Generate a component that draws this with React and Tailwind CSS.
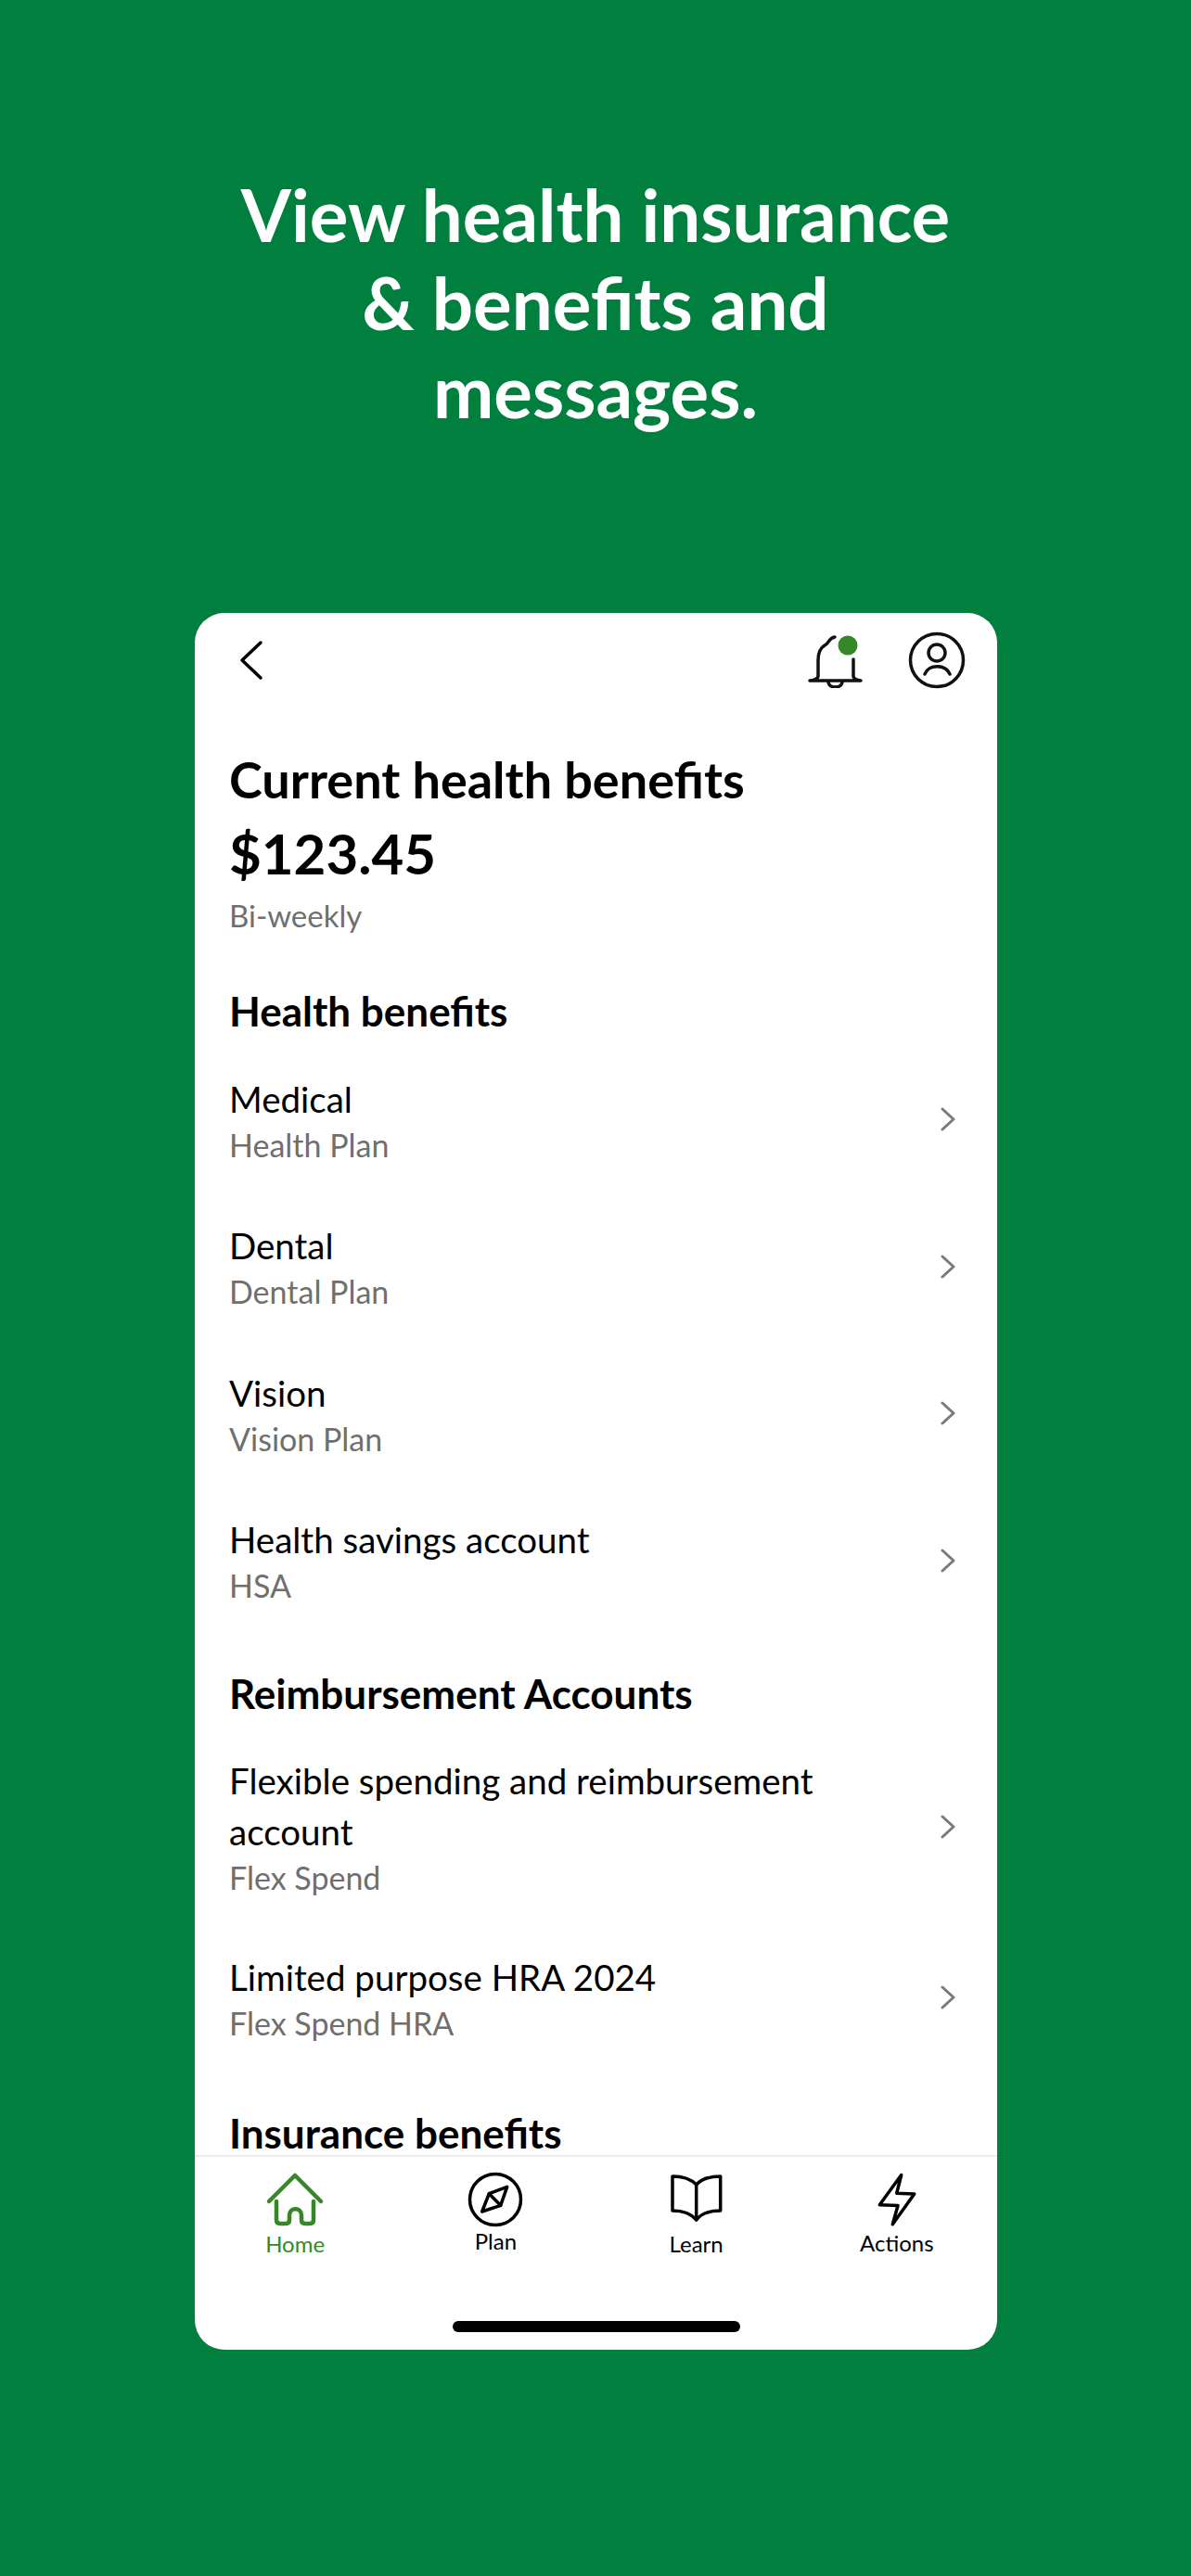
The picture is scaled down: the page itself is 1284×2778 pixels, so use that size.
import React from 'react';

const healthRows = [
  { title: 'Medical', sub: 'Health Plan' },
  { title: 'Dental', sub: 'Dental Plan' },
  { title: 'Vision', sub: 'Vision Plan' },
  { title: 'Health savings account', sub: 'HSA' },
];

const reimbursementRows = [
  { title: 'Flexible spending and reimbursement account', sub: 'Flex Spend' },
  { title: 'Limited purpose HRA 2024', sub: 'Flex Spend HRA' },
];

const BackIcon = () => (
  <svg width="30" height="44" viewBox="0 0 30 44" fill="none" stroke="#000" strokeWidth="3.5" strokeLinecap="round" strokeLinejoin="round">
    <path d="M25 3 L5 22 L25 41" />
  </svg>
);

const BellIcon = () => (
  <svg width="60" height="60" viewBox="30 22 60 60" fill="none" stroke="#111" strokeWidth="3.5" strokeLinecap="round" strokeLinejoin="round">
    <path d="M60 27 C53 28 54 34 49 36 C44 39 42 44 42 52 L42 69 C42 72 37 74 33 74 L88 74 C84 74 80 72 80 69 L80 51" />
    <path d="M53 75 C53 83 68 83 68 75" />
    <circle cx="74" cy="36" r="10.5" fill="#368727" stroke="none" />
  </svg>
);

const PersonIcon = () => (
  <svg width="64" height="64" viewBox="138 20 64 64" fill="none" stroke="#111" strokeWidth="3.5" strokeLinecap="round">
    <circle cx="170" cy="52" r="28.5" />
    <circle cx="170" cy="44" r="9" />
    <path d="M157 67 C161 56 179 56 184 67" />
  </svg>
);

const RowChevron = () => (
  <svg width="20" height="30" viewBox="0 0 20 30" fill="none" stroke="#7a7a7a" strokeWidth="3" strokeLinecap="round" strokeLinejoin="round">
    <path d="M4 4 L16 15 L4 26" />
  </svg>
);

const HomeIcon = () => (
  <svg width="66" height="66" viewBox="15 5 66 66" fill="none" stroke="#368727" strokeWidth="4.5" strokeLinecap="round" strokeLinejoin="round">
    <path d="M20 40 L48 12 L76 40" />
    <path d="M28 40 L28 60 Q28 64 32 64 L38 64 Q42 64 42 60 L42 55 C42 46 55 46 55 55 L55 60 Q55 64 59 64 L64 64 Q68 64 68 60 L68 40" />
  </svg>
);

const PlanIcon = () => (
  <svg width="66" height="66" viewBox="232 4 66 66" fill="none" stroke="#000" strokeWidth="3.5" strokeLinecap="round" strokeLinejoin="round">
    <circle cx="265" cy="37" r="27.5" />
    <path d="M277.7 23.3 L258.3 30.7 L250.7 50 L270.7 43.3 Z" />
    <path d="M258.3 30.7 L270.7 43.3" />
  </svg>
);

const LearnIcon = () => (
  <svg width="66" height="66" viewBox="18 5 66 66" fill="none" stroke="#000" strokeWidth="3.5" strokeLinecap="round" strokeLinejoin="round">
    <path d="M50.7 22 C45 16 35 13 25 13 L25 50 C35 50 45 53 50.7 60 C56 53 66 50 76.7 50 L76.7 13 C66 13 56 16 50.7 22 Z" />
    <path d="M50.7 22 L50.7 60" />
  </svg>
);

const ActionsIcon = () => (
  <svg width="66" height="66" viewBox="234 3 66 66" fill="none" stroke="#000" strokeWidth="3.5" strokeLinecap="round" strokeLinejoin="round">
    <path d="M271.7 9.5 L248.3 41.7 L268 42.5 L262.3 62.7 L285.7 30 L266.7 29.3 Z" />
  </svg>
);

const BenefitRow = ({ title, sub, className }) => (
  <div className={`flex items-center justify-between pr-[43px] ${className}`}>
    <div className="w-[680px]">
      <p className="text-[38.5px] leading-[55px] text-black">{title}</p>
      <p className="text-[34px] leading-[44px] text-[#6f6f6f]">{sub}</p>
    </div>
    <RowChevron />
  </div>
);

const tabs = [
  { label: 'Home', Icon: HomeIcon, color: 'text-[#368727]', offset: 'mt-[0px]' },
  { label: 'Plan', Icon: PlanIcon, color: 'text-black', offset: 'mt-[-3px]' },
  { label: 'Learn', Icon: LearnIcon, color: 'text-black', offset: 'mt-[0px]' },
  { label: 'Actions', Icon: ActionsIcon, color: 'text-black', offset: 'mt-[-1px]' },
];

export default function App() {
  return (
    <div className="min-h-[2778px] bg-[#007f3e] font-['Lato','Liberation_Sans',sans-serif] pt-[184px]">
      <h1 className="mx-auto w-[900px] text-center text-[78px] leading-[95px] font-bold text-white">
        View health insurance<br />&amp; benefits and<br />messages.
      </h1>

      <div className="ml-[210px] mt-[192px] flex h-[1873px] w-[865px] flex-col overflow-hidden rounded-[32px] bg-white">
        <div className="flex h-[102px] shrink-0 items-center justify-between pl-[46px] pr-[33px]">
          <BackIcon />
          <div className="flex items-center gap-[48px]">
            <BellIcon />
            <PersonIcon />
          </div>
        </div>

        <div className="min-h-0 flex-1 overflow-hidden pl-[37px]">
          <h2 className="mt-[48px] text-[54px] leading-[60px] font-bold text-black">Current health benefits</h2>
          <p className="mt-[11px] text-[60px] leading-[76px] font-bold text-black">$123.45</p>
          <p className="mt-[7px] text-[33px] leading-[44px] text-[#6f6f6f]">Bi-weekly</p>

          <h3 className="mt-[56px] text-[44px] leading-[50px] font-bold text-black">Health benefits</h3>
          <div className="mt-[13px]">
            {healthRows.map((row) => (
              <BenefitRow key={row.title} {...row} className="h-[158.5px]" />
            ))}
          </div>

          <h3 className="mt-[39px] text-[44px] leading-[50px] font-bold text-black">Reimbursement Accounts</h3>
          <BenefitRow {...reimbursementRows[0]} className="mt-[14px] h-[210px]" />
          <BenefitRow {...reimbursementRows[1]} className="h-[158px]" />

          <h3 className="mt-[45px] text-[44px] leading-[44px] font-bold text-black">Insurance benefits</h3>
        </div>

        <div className="shrink-0 border-t-2 border-[#ececec]">
          <div className="grid grid-cols-4 pt-[13px]">
            {tabs.map(({ label, Icon, color, offset }) => (
              <div key={label} className="flex flex-col items-center">
                <Icon />
                <span className={`text-[24px] leading-[30px] ${color} ${offset}`}>{label}</span>
              </div>
            ))}
          </div>
          <div className="flex justify-center pt-[68px] pb-[19px]">
            <div className="h-[12px] w-[310px] rounded-full bg-black" />
          </div>
        </div>
      </div>
    </div>
  );
}
